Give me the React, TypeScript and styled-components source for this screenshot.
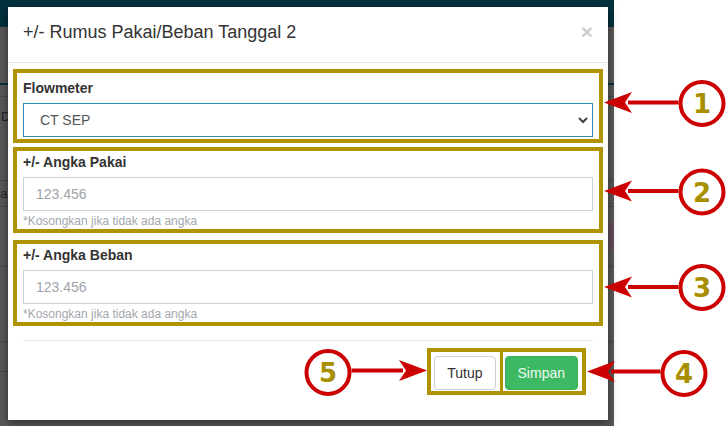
import React from "react";
import styled, { createGlobalStyle } from "styled-components";

const Global = createGlobalStyle`
  html, body { margin: 0; padding: 0; background: #fff; }
  body { font-family: "Liberation Sans", Arial, Helvetica, sans-serif; }
  * { box-sizing: border-box; }
`;

const OLIVE = "#b09300";
const RED = "#cc0000";

const Canvas = styled.div`
  position: relative;
  width: 726px;
  height: 426px;
  overflow: hidden;
  background: #fff;
  display: flex;
`;

const PageShot = styled.div`
  position: relative;
  width: 614px;
  height: 426px;
  background: #595959;
  display: flex;
  flex-direction: column;
  flex: none;
`;

const TopBar = styled.div`
  height: 27px;
  background: #03313e;
  flex: none;
`;

const NavArea = styled.div`
  height: 56px;
  flex: none;
`;

const TealLine = styled.div`
  height: 2px;
  background: #07313d;
  flex: none;
`;

const BgRow = styled.div<{ $h: number; $line?: boolean }>`
  height: ${(p) => p.$h}px;
  flex: none;
  border-bottom: 1px solid ${(p) => (p.$line === false ? "transparent" : "#4a4a4a")};
  display: flex;
  align-items: center;
  justify-content: space-between;
  overflow: hidden;
  white-space: nowrap;
  color: #262626;
  font-size: 13px;
`;

const BgText = styled.span<{ $indent: number }>`
  margin-left: ${(p) => p.$indent}px;
`;

const BgBadge = styled.span`
  width: 24px;
  height: 30px;
  margin-right: -10px;
  background: #65505b;
`;

const Modal = styled.div`
  position: absolute;
  left: 8px;
  top: 7px;
  width: 600px;
  height: 413px;
  background: #fff;
  box-shadow: 0 3px 9px rgba(0, 0, 0, 0.5);
  display: flex;
  flex-direction: column;
`;

const Header = styled.div`
  display: flex;
  align-items: center;
  justify-content: space-between;
  padding: 13px 15px 16px 15px;
  border-bottom: 1px solid #e5e5e5;
`;

const Title = styled.h4`
  margin: 0;
  font-size: 18px;
  font-weight: 400;
  line-height: 25.7px;
  color: #333;
`;

const Close = styled.button`
  border: 0;
  background: none;
  padding: 0;
  margin-top: -3px;
  font-family: "Liberation Sans", Arial, sans-serif;
  font-size: 21px;
  font-weight: 700;
  line-height: 1;
  color: #000;
  opacity: 0.2;
`;

const Body = styled.div`
  padding: 6px 5px 0 5px;
  display: flex;
  flex-direction: column;
`;

const Group = styled.div<{ $top: number; $pt: number; $pb: number }>`
  margin-top: ${(p) => p.$top}px;
  border: 4px solid ${OLIVE};
  padding: ${(p) => p.$pt}px 6px ${(p) => p.$pb}px 6px;
  display: flex;
  flex-direction: column;
`;

const Label = styled.label`
  display: block;
  font-size: 14px;
  font-weight: 700;
  line-height: 20px;
  color: #333;
  margin-bottom: 5px;
`;

const SelectWrap = styled.div`
  position: relative;
  height: 34px;
`;

const Select = styled.select`
  appearance: none;
  -webkit-appearance: none;
  width: 100%;
  height: 34px;
  border: 1px solid #2a8db4;
  border-radius: 0;
  background: #fff;
  padding: 0 16px;
  font-family: "Liberation Sans", Arial, sans-serif;
  font-size: 14px;
  color: #555;
  outline: none;
`;

const Chevron = styled.svg`
  position: absolute;
  right: 5px;
  top: 14px;
  pointer-events: none;
`;

const Input = styled.input`
  width: 100%;
  height: 34px;
  border: 1px solid #ccd1d7;
  border-radius: 0;
  padding: 6px 12px;
  font-family: "Liberation Sans", Arial, sans-serif;
  font-size: 14px;
  color: #555;
  outline: none;
  &::placeholder {
    color: #9ea3a9;
  }
`;

const Help = styled.span`
  display: block;
  margin-top: 3px;
  font-size: 12px;
  line-height: 15px;
  color: #a2a7ad;
`;

const Rule = styled.div`
  margin: 14px 10px 0 10px;
  border-top: 1px solid #ececec;
`;

const Footer = styled.div`
  display: flex;
  justify-content: flex-end;
  padding: 7px 17px 0 0;
`;

const ButtonGroupMark = styled.div`
  display: flex;
  border: 4px solid ${OLIVE};
`;

const ButtonCell = styled.div<{ $divider?: boolean }>`
  padding: 4px 4px 1px ${(p) => (p.$divider ? 2 : 3)}px;
  border-left: ${(p) => (p.$divider ? `3px solid ${OLIVE}` : "none")};
`;

const Btn = styled.button<{ $primary?: boolean }>`
  height: 34px;
  padding: 6px 12px;
  border-radius: 4px;
  font-family: "Liberation Sans", Arial, sans-serif;
  font-size: 14px;
  line-height: 20px;
  border: 1px solid ${(p) => (p.$primary ? "#36b05c" : "#cfcfcf")};
  background: ${(p) => (p.$primary ? "#3db964" : "#fff")};
  color: ${(p) => (p.$primary ? "#effaf2" : "#333")};
`;

const Overlay = styled.svg`
  position: absolute;
  left: 0;
  top: 0;
  pointer-events: none;
`;

type Callout = { n: number; cx: number; cy: number; tx: number; ty: number; dir: "left" | "right" };

const callouts: Callout[] = [
  { n: 1, cx: 702, cy: 103.5, tx: 604, ty: 102.5, dir: "left" },
  { n: 2, cx: 702, cy: 192, tx: 604, ty: 191, dir: "left" },
  { n: 3, cx: 702, cy: 287.5, tx: 604, ty: 287, dir: "left" },
  { n: 4, cx: 684, cy: 373.5, tx: 587, ty: 371.5, dir: "left" },
  { n: 5, cx: 328, cy: 372.5, tx: 427, ty: 370.5, dir: "right" },
];

function Arrow({ c }: { c: Callout }) {
  const s = c.dir === "left" ? 1 : -1;
  const r = 23.5;
  const lineStart = c.cx - s * r;
  const lineEnd = c.tx + s * 24;
  const head = `${c.tx},${c.ty} ${c.tx + s * 28},${c.ty - 10.5} ${c.tx + s * 21},${c.ty} ${c.tx + s * 28},${c.ty + 10.5}`;
  return (
    <g>
      <line x1={lineStart} y1={c.ty} x2={lineEnd} y2={c.ty} stroke={RED} strokeWidth={3.8} />
      <polygon points={head} fill={RED} />
      <circle cx={c.cx} cy={c.cy} r={21.5} fill="#fff" stroke={RED} strokeWidth={4} />
      <text
        x={c.cx}
        y={c.cy + 9.5}
        textAnchor="middle"
        fontFamily="'DejaVu Sans', sans-serif"
        fontWeight={700}
        fontSize={26}
        fill="#a88f00"
      >
        {c.n}
      </text>
    </g>
  );
}

function Field({ label, top, pt }: { label: string; top: number; pt: number }) {
  return (
    <Group $top={top} $pt={pt} $pb={0}>
      <Label>{label}</Label>
      <Input placeholder="123.456" />
      <Help>*Kosongkan jika tidak ada angka</Help>
    </Group>
  );
}

export default function App() {
  return (
    <>
      <Global />
      <Canvas>
        <PageShot>
          <TopBar />
          <NavArea />
          <TealLine />
          <BgRow $h={12} />
          <BgRow $h={39} $line={false}>
            <BgText $indent={1}>Data</BgText>
          </BgRow>
          <BgRow $h={45} />
          <BgRow $h={26}>
            <BgText $indent={0}>ar</BgText>
          </BgRow>
          <BgRow $h={60}>
            <span />
            <BgBadge />
          </BgRow>
          <BgRow $h={75} />
          <BgRow $h={30} />
          <BgRow $h={60} />
          <Modal>
            <Header>
              <Title>+/- Rumus Pakai/Beban Tanggal 2</Title>
              <Close aria-label="Close">×</Close>
            </Header>
            <Body>
              <Group $top={0} $pt={5} $pb={2}>
                <Label>Flowmeter</Label>
                <SelectWrap>
                  <Select defaultValue="CT SEP">
                    <option>CT SEP</option>
                  </Select>
                  <Chevron width="10" height="7" viewBox="0 0 10 7">
                    <polyline points="1,1 5,5 9,1" fill="none" stroke="#444" strokeWidth="2" />
                  </Chevron>
                </SelectWrap>
              </Group>
              <Field label="+/- Angka Pakai" top={4} pt={1} />
              <Field label="+/- Angka Beban" top={7} pt={1} />
              <Rule />
              <Footer>
                <ButtonGroupMark>
                  <ButtonCell>
                    <Btn>Tutup</Btn>
                  </ButtonCell>
                  <ButtonCell $divider>
                    <Btn $primary>Simpan</Btn>
                  </ButtonCell>
                </ButtonGroupMark>
              </Footer>
            </Body>
          </Modal>
        </PageShot>
        <Overlay width="726" height="426" viewBox="0 0 726 426">
          {callouts.map((c) => (
            <Arrow key={c.n} c={c} />
          ))}
        </Overlay>
      </Canvas>
    </>
  );
}
